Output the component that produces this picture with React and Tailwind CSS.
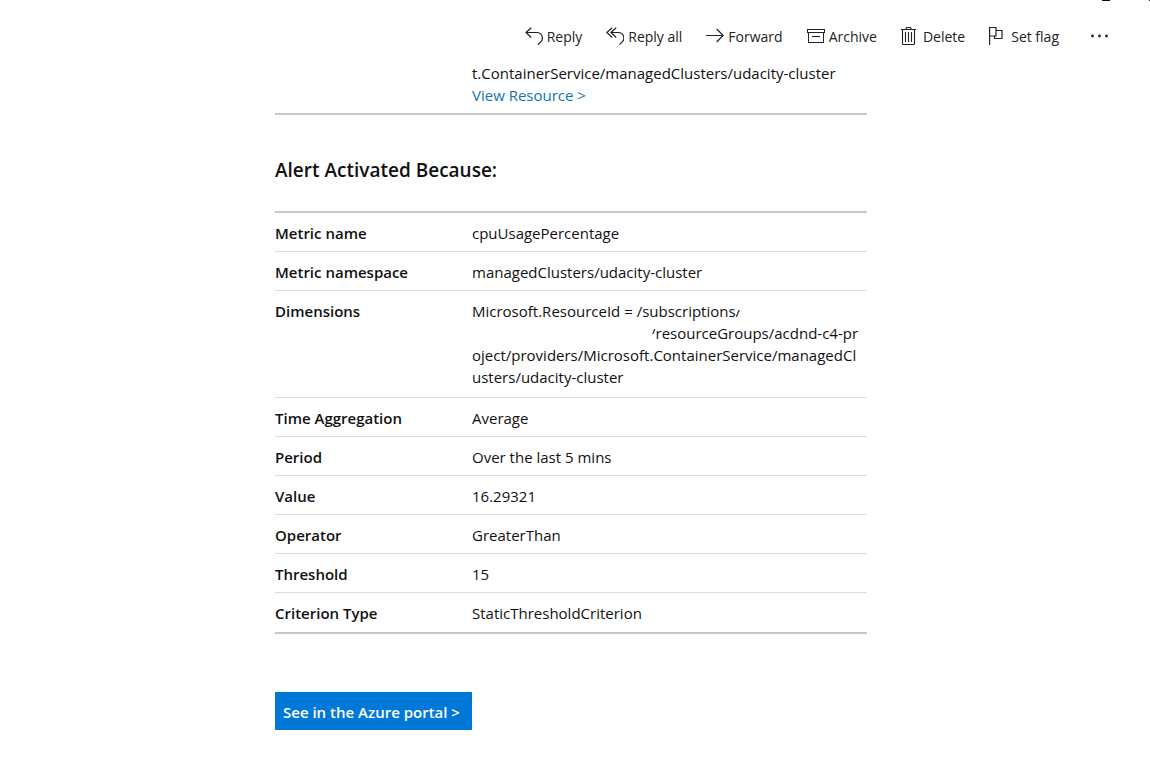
const iconProps = {
  fill: 'none',
  stroke: 'currentColor',
  strokeWidth: 1.2,
  width: 18,
  height: 20,
  viewBox: '0 1 18 20',
  'aria-hidden': true,
  className: 'shrink-0',
};

const ReplyIcon = () => (
  <svg {...iconProps}>
    <path d="M6.200 1.700 1 6.500l5.200 5M1 6.500h10.500a5.500 5.500 0 0 1 4 9.600l-2.700 2.600" />
  </svg>
);

const ReplyAllIcon = () => (
  <svg {...iconProps}>
    <path d="M6.200 1.700.8 6.500l5.400 5M10.200 1.700 5 6.500l5.200 5M5 6.500h7a5.500 5.500 0 0 1 4 9.600l-2.600 2.600" />
  </svg>
);

const ForwardIcon = () => (
  <svg {...iconProps}>
    <path d="M0 9.500h17.200M10.700 3l6.500 6.500-6.500 6.500" />
  </svg>
);

const ArchiveIcon = () => (
  <svg {...iconProps} shapeRendering="crispEdges">
    <path d="M.5 3.500h17v3H.5zM1.500 6.500v10h15v-10M5 10.500h8" />
  </svg>
);

const DeleteIcon = () => (
  <svg {...iconProps} strokeWidth={1.1}>
    <path d="M0 3.500h15M5 3.500v-1q0-1 1-1h3q1 0 1 1v1M1.500 3.500v14q0 1 1 1h10q1 0 1-1v-14M4.500 6v10M7.500 6v10M10.500 6v10" />
  </svg>
);

const FlagIcon = () => (
  <svg {...iconProps}>
    <path d="M.6 19V1.500h6.400v8.500H.6M7 4.500h6v8H5.500V10" />
  </svg>
);

const MoreIcon = () => (
  <svg width="18" height="20" viewBox="0 1 18 20" fill="currentColor" aria-hidden="true">
    <circle cx="1.500" cy="10" r="1.400" />
    <circle cx="8.500" cy="10" r="1.400" />
    <circle cx="15.500" cy="10" r="1.400" />
  </svg>
);

const actions = [
  ['Reply', ReplyIcon],
  ['Reply all', ReplyAllIcon],
  ['Forward', ForwardIcon],
  ['Archive', ArchiveIcon],
  ['Delete', DeleteIcon],
  ['Set flag', FlagIcon],
];

const Dimensions = () => (
  <>
    Microsoft.ResourceId = /subscriptions
    <span className="inline-block [clip-path:inset(45%_0_0_0)]">/</span>
    <br />
    <span className="ml-[178px] inline-block [clip-path:inset(0_0_45%_0)]">/</span>
    resourceGroups/acdnd-c4-pr
    <br />
    oject/providers/Microsoft.ContainerService/managedCl
    <br />
    usters/udacity-cluster
  </>
);

const rows = [
  ['Metric name', 'cpuUsagePercentage'],
  ['Metric namespace', 'managedClusters/udacity-cluster'],
  ['Dimensions', <Dimensions />],
  ['Time Aggregation', 'Average'],
  ['Period', 'Over the last 5 mins'],
  ['Value', '16.29321'],
  ['Operator', 'GreaterThan'],
  ['Threshold', '15'],
  ['Criterion Type', 'StaticThresholdCriterion'],
];

export default function App() {
  return (
    <div className="min-h-screen bg-white font-['Open_Sans','Noto_Sans',sans-serif] text-[15px] leading-[22px] text-[#111]">
      <header>
        <div className="flex h-[25px] justify-end" aria-hidden="true">
          <svg width="48" height="2" viewBox="0 0 48 2" fill="#111">
            <path d="M0 0h8v1H0zM47 0h1v1h-1z" />
          </svg>
        </div>
        <div className="flex items-center justify-end gap-6 pr-[41px] text-sm text-[#222]">
          {actions.map(([label, Icon]) => (
            <button key={label} type="button" className="flex h-6 items-center gap-1 whitespace-nowrap">
              <Icon />
              {label}
            </button>
          ))}
          <button type="button" aria-label="More actions" className="ml-2 flex h-6 items-center">
            <MoreIcon />
          </button>
        </div>
      </header>

      <main className="mr-2">
        <div className="mx-auto max-w-[592px]">
          <div className="border-b-2 border-[#c8c8c8] pt-[13px] pb-[7px] pl-[197px]">
            <p>t.ContainerService/managedClusters/udacity-cluster</p>
            <a href="#resource" className="text-[#1373b5]">View Resource &gt;</a>
          </div>

          <h2 className="pt-[41px] pb-[27px] text-[19px] leading-7 font-semibold">Alert Activated Because:</h2>

          <table className="w-full border-separate border-spacing-0 border-y-2 border-[#c8c8c8] text-left">
            <tbody>
              {rows.map(([name, value]) => (
                <tr key={name} className="group h-[39px] nth-3:h-[107px]">
                  <th
                    scope="row"
                    className="w-[197px] border-b border-[#dcdcdc] pt-[9px] pb-1 align-top font-semibold group-last:border-b-0"
                  >
                    {name}
                  </th>
                  <td className="border-b border-[#dcdcdc] pt-[9px] pb-1 align-top whitespace-nowrap group-last:border-b-0">
                    {value}
                  </td>
                </tr>
              ))}
            </tbody>
          </table>

          <a
            href="#portal"
            className="mt-[58px] inline-block bg-[#0078d7] pt-[9px] pr-3 pb-[7px] pl-2 font-semibold text-white"
          >
            See in the Azure portal &gt;
          </a>
        </div>
      </main>
    </div>
  );
}
